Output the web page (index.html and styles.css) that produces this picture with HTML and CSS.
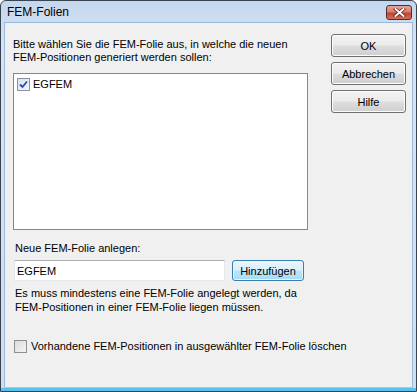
FILE: index.html
```html
<!DOCTYPE html>
<html lang="de">

<head>
    <meta charset="UTF-8">
    <title>FEM-Folien</title>
    <link rel="stylesheet" href="styles.css">
</head>

<body>
    <div class="window">
        <div class="titlebar">
            <span class="title">FEM-Folien</span>
            <button class="close-btn">
                <svg width="13" height="9" viewBox="0 0 13 9">
                    <path d="M2.5 1 L10.5 8 M10.5 1 L2.5 8" stroke="#6e2020" stroke-width="3.4" stroke-linecap="square" />
                    <path d="M2.5 1 L10.5 8 M10.5 1 L2.5 8" stroke="#fff" stroke-width="1.9" stroke-linecap="square" />
                </svg>
            </button>
        </div>

        <div class="client">
            <div class="main">
                <div class="label intro">Bitte wählen Sie die FEM-Folie aus, in welche die neuen<br>FEM-Positionen generiert werden sollen:</div>

                <div class="listbox">
                    <label class="list-item">
                        <span class="check checked">
                            <svg width="9" height="9" viewBox="0 0 9 9">
                                <path d="M1 4.5 L3.5 7 L8 1.5" fill="none" stroke="#2a47b4" stroke-width="1.8" />
                            </svg>
                        </span>
                        EGFEM
                    </label>
                </div>

                <div class="label new-label">Neue FEM-Folie anlegen:</div>

                <div class="add-row">
                    <input class="textbox" type="text" value="EGFEM">
                    <button class="btn btn-active">Hinzufügen</button>
                </div>

                <div class="label note">Es muss mindestens eine FEM-Folie angelegt werden, da<br>FEM-Positionen in einer FEM-Folie liegen müssen.</div>

                <label class="delete-row">
                    <span class="check"></span>
                    Vorhandene FEM-Positionen in ausgewählter FEM-Folie löschen
                </label>
            </div>

            <div class="side">
                <button class="btn">OK</button>
                <button class="btn">Abbrechen</button>
                <button class="btn">Hilfe</button>
            </div>
        </div>
    </div>
</body>

</html>
```

FILE: styles.css
```css
body {
    margin: 0;
    font-family: "Liberation Sans", Arial, sans-serif;
    font-size: 11px;
    color: #000;
}

.window {
    width: 417px;
    height: 392px;
    box-sizing: border-box;
    border: 1px solid #3a4350;
    border-radius: 6px 6px 0 0;
    background: linear-gradient(to bottom, #c4d7ee 0px, #d6e3f2 40px, #cfdff0 100%);
    display: flex;
    flex-direction: column;
    padding: 0 3px 3px 3px;
    box-shadow: inset 0 -3px 0 #5bc2ec;
}

.titlebar {
    height: 21px;
    display: flex;
    align-items: center;
    justify-content: space-between;
    padding-left: 3px;
}

.title {
    font-size: 12px;
    color: #000;
    margin-top: 1px;
}

.close-btn {
    width: 26px;
    height: 15px;
    margin: 2px 1px 0 0;
    padding: 0;
    border: 1px solid #5a2a2a;
    border-radius: 3px;
    background: linear-gradient(to bottom, #e6a69a 0%, #d5806f 45%, #c2452f 55%, #d2705c 100%);
    display: flex;
    align-items: center;
    justify-content: center;
}

.client {
    flex: 1;
    background-color: #f0f0f0;
    display: flex;
    padding: 11px 0 0 8px;
    border: 1px solid #9cb9dc;
    border-bottom-color: #8fd3f2;
}

.main {
    width: 300px;
}

.label {
    line-height: 14px;
    white-space: nowrap;
}

.intro {
    margin-top: 4px;
    line-height: 13px;
}

.listbox {
    margin-top: 9px;
    width: 295px;
    height: 157px;
    box-sizing: border-box;
    border: 1px solid #828790;
    background-color: #fff;
    padding: 3px 3px;
}

.list-item {
    display: flex;
    align-items: center;
    gap: 3px;
    line-height: 14px;
}

.check {
    width: 11px;
    height: 11px;
    border: 1px solid #8f8f8f;
    background: linear-gradient(135deg, #dcdcdc 0%, #f4f4f4 100%);
    display: inline-flex;
    align-items: center;
    justify-content: center;
    flex-shrink: 0;
}

.check.checked {
    background: linear-gradient(135deg, #d8e2f2 0%, #f2f6fc 100%);
    border-color: #8a93a6;
}

.new-label {
    margin-top: 12px;
    margin-left: 2px;
    line-height: 13px;
}

.add-row {
    margin-top: 5px;
    margin-left: 1px;
    display: flex;
    gap: 7px;
}

.textbox {
    width: 211px;
    height: 21px;
    box-sizing: border-box;
    border: 1px solid #e3e9ef;
    border-top-color: #abadb3;
    font-family: "Liberation Sans", Arial, sans-serif;
    font-size: 11px;
    padding: 0 0 0 2px;
    margin: 0;
    background-color: #fff;
    outline: none;
}

.btn {
    width: 75px;
    height: 23px;
    box-sizing: border-box;
    border: 1px solid #707070;
    border-radius: 3px;
    background: linear-gradient(to bottom, #f2f2f2 0%, #ebebeb 48%, #dddddd 52%, #cfcfcf 100%);
    font-family: "Liberation Sans", Arial, sans-serif;
    font-size: 11px;
    color: #000;
    padding: 0;
    box-shadow: inset 0 0 0 1px #fcfcfc;
}

.btn-active {
    width: 72px;
    height: 21px;
    border-color: #3c7fb1;
    background: linear-gradient(to bottom, #eaf6fd 0%, #d9f0fc 48%, #bee6fd 52%, #a7d9f5 100%);
    box-shadow: inset 0 0 0 1px #e6f4fc;
}

.note {
    margin-top: 5px;
    margin-left: 2px;
}

.delete-row {
    margin-top: 25px;
    margin-left: 1px;
    display: flex;
    align-items: center;
    gap: 4px;
    line-height: 14px;
    white-space: nowrap;
}

.side {
    margin-left: 18px;
    display: flex;
    flex-direction: column;
    gap: 5px;
}
```
